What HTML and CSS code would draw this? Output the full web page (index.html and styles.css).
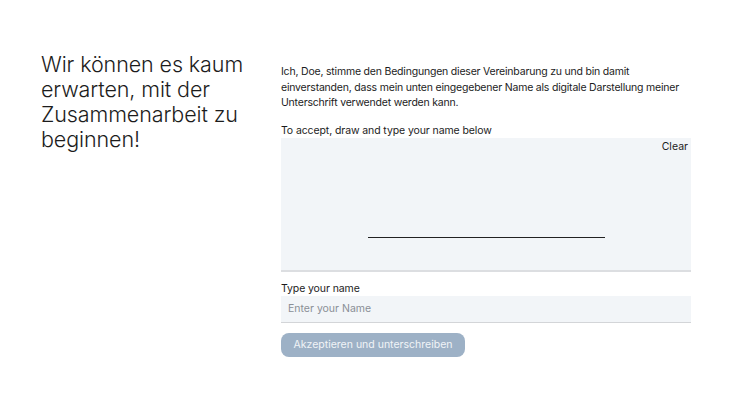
FILE: index.html
```html
<html>

<head>
	<link rel="stylesheet" href="styles.css">
</head>

<body>
	<div class="page">
		<h2 class="intro">Wir können es kaum erwarten, mit der Zusammenarbeit zu beginnen!</h2>
		<form class="signForm" action="" name="signForm">
			<p class="terms">Ich, Doe, stimme den Bedingungen dieser Vereinbarung zu und bin damit einverstanden, dass mein unten eingegebener Name als digitale Darstellung meiner Unterschrift verwendet werden kann.</p>
			<label class="fieldLabel">To accept, draw and type your name below</label>
			<div class="pad">
				<span class="clear">Clear</span>
				<div class="signLine"></div>
			</div>
			<label class="fieldLabel" for="signName">Type your name</label>
			<input type="text" id="signName" class="nameInput" placeholder="Enter your Name" />
			<button type="button" class="submit">Akzeptieren und unterschreiben</button>
		</form>
	</div>
</body>

</html>
```

FILE: styles.css
```css
body {
	margin: 0;
	background: #fff;
	color: #1c1c1c;
	font-family: Inter, "Noto Sans", sans-serif;
}

.page {
	display: flex;
	padding: 52px 59px 0 41px;
	gap: 30px;
}

.intro {
	width: 210px;
	flex: none;
	margin: 0;
	font-size: 21.5px;
	line-height: 25px;
	font-weight: 300;
	letter-spacing: -0.1px;
}

.signForm {
	flex: 1;
	display: flex;
	flex-direction: column;
	margin: 0;
	padding-top: 12px;
}

.terms {
	margin: 0 0 13px;
	font-size: 10.5px;
	line-height: 15.5px;
	letter-spacing: -0.2px;
}

.fieldLabel {
	font-size: 10.5px;
	line-height: 14px;
	letter-spacing: -0.1px;
}

.pad {
	position: relative;
	height: 132px;
	background: #f2f5f8;
	border-bottom: 2px solid #dcdee1;
	display: flex;
	justify-content: center;
	margin-bottom: 10px;
}

.clear {
	position: absolute;
	top: 2px;
	right: 3px;
	font-size: 10.5px;
	line-height: 14px;
}

.signLine {
	width: 237px;
	height: 1.5px;
	margin-top: 99px;
	background: #222;
}

.nameInput {
	height: 27px;
	border: none;
	border-bottom: 1px solid #d3d5d8;
	background: #f2f5f8;
	padding: 0 7px;
	font-family: inherit;
	font-size: 10.5px;
	outline: none;
	margin-bottom: 10px;
}

.nameInput::placeholder {
	color: #8a8f96;
}

.submit {
	align-self: flex-start;
	width: 184px;
	height: 24px;
	border: none;
	border-radius: 8px;
	background: #9db1c6;
	color: #f1f4f7;
	font-family: inherit;
	font-size: 10.5px;
}
```
